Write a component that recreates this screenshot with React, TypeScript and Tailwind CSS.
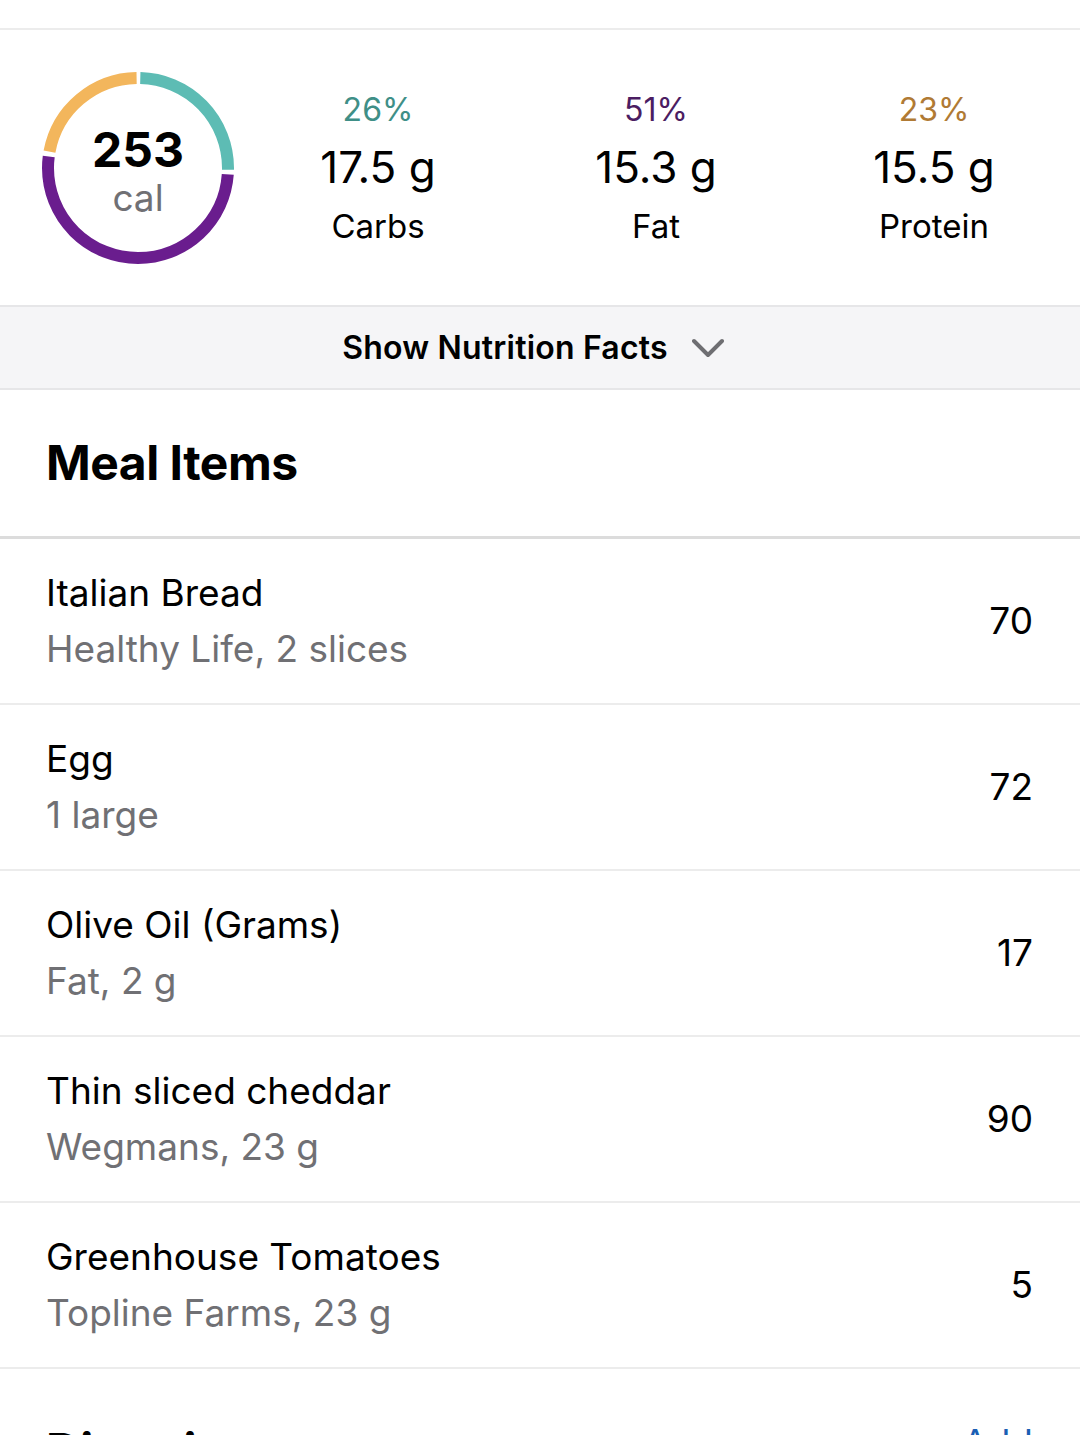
import React from 'react'

const macros = [
  { pct: '26%', grams: '17.5 g', label: 'Carbs', color: 'text-[#3f8f87]' },
  { pct: '51%', grams: '15.3 g', label: 'Fat', color: 'text-[#4b1d62]' },
  { pct: '23%', grams: '15.5 g', label: 'Protein', color: 'text-[#b07a34]' },
]

const items = [
  { name: 'Italian Bread', detail: 'Healthy Life, 2 slices', cal: 70 },
  { name: 'Egg', detail: '1 large', cal: 72 },
  { name: 'Olive Oil (Grams)', detail: 'Fat, 2 g', cal: 17 },
  { name: 'Thin sliced cheddar', detail: 'Wegmans, 23 g', cal: 90 },
  { name: 'Greenhouse Tomatoes', detail: 'Topline Farms, 23 g', cal: 5 },
]

// ring segments in degrees, clockwise from 12 o'clock
const segments = [
  { from: 1.5, to: 91, color: '#5dbcb4' },
  { from: 94, to: 277, color: '#6a1d8e' },
  { from: 280, to: 358.5, color: '#f3b65c' },
]

function CalorieRing() {
  const r = 90
  const c = 2 * Math.PI * r
  return (
    <div className="relative w-[192px] h-[192px] shrink-0">
      <svg width="192" height="192" viewBox="0 0 192 192" className="-rotate-90">
        {segments.map((s) => {
          const len = ((s.to - s.from) / 360) * c
          return (
            <circle
              key={s.color}
              cx="96"
              cy="96"
              r={r}
              fill="none"
              stroke={s.color}
              strokeWidth="12"
              strokeDasharray={`${len} ${c}`}
              strokeDashoffset={-(s.from / 360) * c}
            />
          )
        })}
      </svg>
      <div className="absolute inset-0 flex flex-col items-center justify-center pt-[4px]">
        <span className="text-[48px] font-bold leading-[56px] text-black">253</span>
        <span className="text-[37px] leading-[40px] text-[#707074]">cal</span>
      </div>
    </div>
  )
}

export default function App() {
  return (
    <div className="w-[1080px] bg-white font-['Inter',sans-serif] text-black">
      <div className="h-[30px] border-b-2 border-[#ececec]" />

      <div className="flex items-center h-[275px] pl-[42px]">
        <CalorieRing />
        <div className="grid grid-cols-3 ml-[5px] w-[834px] self-start pt-[58px]">
          {macros.map((m) => (
            <div key={m.label} className="flex flex-col items-center">
              <span className={`text-[32px] leading-[44px] ${m.color}`}>{m.pct}</span>
              <span className="text-[44px] leading-[60px] mt-[5px] text-black">{m.grams}</span>
              <span className="text-[33px] leading-[56px] mt-[1px] text-black">{m.label}</span>
            </div>
          ))}
        </div>
      </div>

      <div className="h-[85px] flex items-center justify-center gap-[24px] bg-[#f5f5f7] border-y-2 border-[#e6e6e8] pr-[14px]">
        <span className="text-[32px] font-semibold tracking-[0.2px] text-black">Show Nutrition Facts</span>
        <svg width="32" height="20" viewBox="0 0 32 20" fill="none">
          <path d="M2 3 L16 17 L30 3" stroke="#6e6e72" strokeWidth="4" strokeLinecap="round" strokeLinejoin="round" />
        </svg>
      </div>

      <div className="h-[149px] flex items-center pl-[46px] border-b-[3px] border-[#dcdcdc]">
        <h2 className="text-[48px] font-bold tracking-[-0.5px]">Meal Items</h2>
      </div>

      {items.map((it) => (
        <div
          key={it.name}
          className="h-[166px] flex items-center justify-between pl-[46px] pr-[47px] border-b-2 border-[#ececec]"
        >
          <div className="flex flex-col">
            <span className="text-[37px] leading-[56px] text-black">{it.name}</span>
            <span className="text-[37px] leading-[56px] text-[#707074]">{it.detail}</span>
          </div>
          <span className="text-[37px] text-black">{it.cal}</span>
        </div>
      ))}

      <div className="flex items-start justify-between pl-[46px] pr-[47px] pt-[46px] pb-[40px]">
        <h2 className="text-[48px] font-bold tracking-[-0.5px]">Directions</h2>
        <span className="text-[37px] text-[#1a5fb4]">Add</span>
      </div>
    </div>
  )
}
